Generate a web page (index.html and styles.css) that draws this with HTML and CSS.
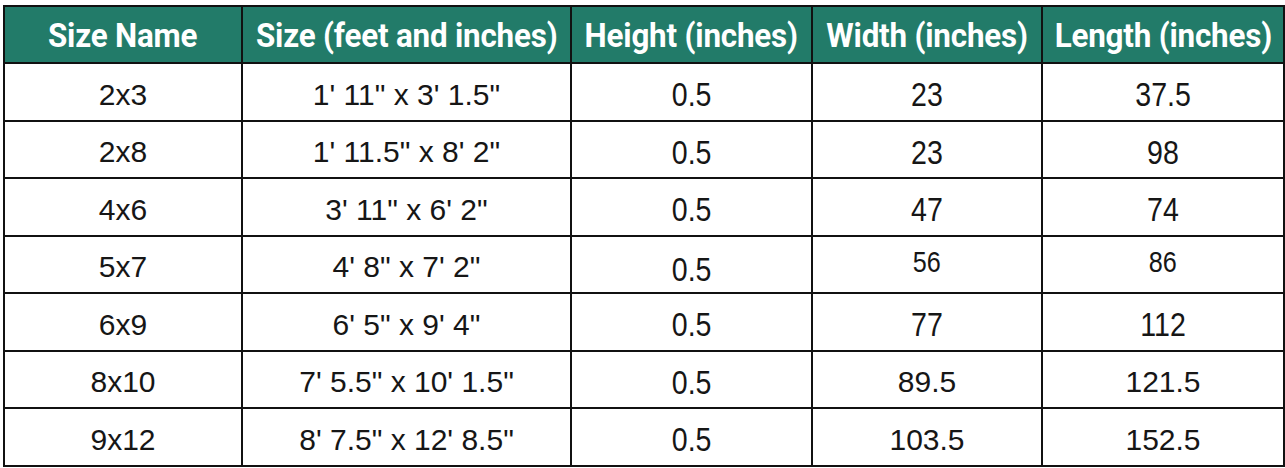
FILE: index.html
```html
<!DOCTYPE html>
<html lang="en">
<head>
    <meta charset="UTF-8">
    <meta name="viewport" content="width=device-width, initial-scale=1.0">
    <title>Rug Sizes</title>
    <link rel="stylesheet" href="styles.css">
</head>
<body>
    <!-- Size chart -->
    <table class="size-table">
        <colgroup>
            <col class="col-name">
            <col class="col-size">
            <col class="col-height">
            <col class="col-width">
            <col class="col-length">
        </colgroup>
        <thead>
            <tr>
                <th><span class="narrow">Size Name</span></th>
                <th><span class="narrow">Size (feet and inches)</span></th>
                <th><span class="narrow">Height (inches)</span></th>
                <th><span class="narrow">Width (inches)</span></th>
                <th><span class="narrow">Length (inches)</span></th>
            </tr>
        </thead>
        <tbody>
            <tr>
                <td>2x3</td>
                <td>1' 11" x 3' 1.5"</td>
                <td class="num"><span class="narrow">0.5</span></td>
                <td class="num"><span class="narrow">23</span></td>
                <td class="num"><span class="narrow">37.5</span></td>
            </tr>
            <tr>
                <td>2x8</td>
                <td>1' 11.5" x 8' 2"</td>
                <td class="num"><span class="narrow">0.5</span></td>
                <td class="num"><span class="narrow">23</span></td>
                <td class="num"><span class="narrow">98</span></td>
            </tr>
            <tr>
                <td>4x6</td>
                <td>3' 11" x 6' 2"</td>
                <td class="num"><span class="narrow">0.5</span></td>
                <td class="num"><span class="narrow">47</span></td>
                <td class="num"><span class="narrow">74</span></td>
            </tr>
            <tr>
                <td>5x7</td>
                <td>4' 8" x 7' 2"</td>
                <td class="num low"><span class="narrow">0.5</span></td>
                <td class="num small"><span class="narrow">56</span></td>
                <td class="num small"><span class="narrow">86</span></td>
            </tr>
            <tr>
                <td>6x9</td>
                <td>6' 5" x 9' 4"</td>
                <td class="num"><span class="narrow">0.5</span></td>
                <td class="num"><span class="narrow">77</span></td>
                <td class="num"><span class="narrow">112</span></td>
            </tr>
            <tr>
                <td>8x10</td>
                <td>7' 5.5" x 10' 1.5"</td>
                <td class="num"><span class="narrow">0.5</span></td>
                <td>89.5</td>
                <td>121.5</td>
            </tr>
            <tr>
                <td>9x12</td>
                <td>8' 7.5" x 12' 8.5"</td>
                <td class="num"><span class="narrow">0.5</span></td>
                <td>103.5</td>
                <td>152.5</td>
            </tr>
        </tbody>
    </table>
</body>
</html>
```

FILE: styles.css
```css
* {
    box-sizing: border-box;
    margin: 0;
    padding: 0;
}

body {
    background: #fff;
    padding: 5px 0 0 3px;
}

/* Таблица размеров */
.size-table {
    width: 1280px;
    border-collapse: collapse;
    table-layout: fixed;
    font-family: 'Liberation Sans', Arial, sans-serif;
    color: #161616;
}

.col-name { width: 238px; }
.col-size { width: 329px; }
.col-height { width: 241px; }
.col-width { width: 230px; }
.col-length { width: 242px; }

.size-table th,
.size-table td {
    border: 2px solid #111;
    text-align: center;
    vertical-align: middle;
    white-space: nowrap;
}

.narrow {
    display: inline-block;
    transform: scaleX(0.84);
}

.size-table th {
    height: 57px;
    padding-top: 2px;
    background: #227b69;
    color: #fff;
    font-family: Roboto, 'Liberation Sans', sans-serif;
    font-weight: 700;
    font-size: 33px;
    letter-spacing: -0.2px;
}

.size-table th .narrow {
    transform: scaleX(0.95);
}

.size-table td {
    height: 57.5px;
    padding-top: 6px;
    font-size: 30px;
}

.size-table td.num {
    font-size: 34px;
}

.size-table td.low {
    vertical-align: bottom;
    padding-bottom: 3px;
}

.size-table td.small {
    padding-top: 0;
    padding-bottom: 4px;
    font-size: 30px;
}
```
